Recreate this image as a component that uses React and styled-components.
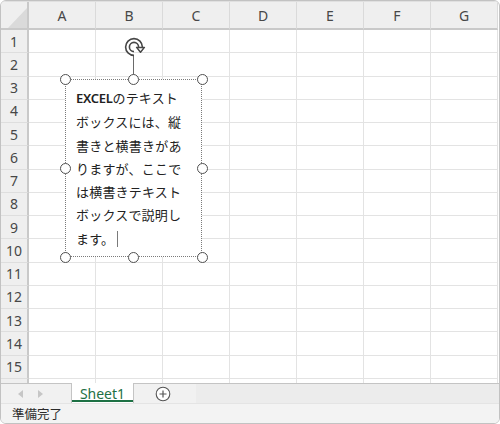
import React from "react";
import styled, { createGlobalStyle } from "styled-components";

const Global = createGlobalStyle`
  html, body { margin: 0; padding: 0; background: #ffffff; }
  body { font-family: "Noto Sans", "Noto Sans CJK JP", sans-serif; }
`;

const Frame = styled.div`
  position: relative;
  width: 500px;
  height: 424px;
  box-sizing: border-box;
  border: 1px solid #c2c2c2;
  border-radius: 6px;
  overflow: hidden;
  background: #ffffff;
  display: flex;
  flex-direction: column;
`;

const Sheet = styled.div`
  flex: 0 0 381px;
  overflow: hidden;
  display: grid;
  grid-template-columns: 28px repeat(7, 67px);
  grid-template-rows: 28px repeat(16, 23.25px);
  border-top: 1px solid #e0e0e0;
`;

const Corner = styled.div`
  position: relative;
  background: #efefef;
  border-right: 2px solid #c9c9c9;
  border-bottom: 2px solid #c9c9c9;
  box-sizing: border-box;
  svg { position: absolute; left: 7px; top: 6px; }
`;

const ColHead = styled.div`
  background: #efefef;
  border-right: 1px solid #dadada;
  border-bottom: 2px solid #c9c9c9;
  box-sizing: border-box;
  display: flex;
  align-items: center;
  justify-content: center;
  font-family: "Noto Sans", sans-serif;
  font-size: 14px;
  color: #474747;
  padding-top: 1px;
`;

const RowHead = styled.div`
  background: #efefef;
  border-right: 2px solid #c9c9c9;
  border-bottom: 1px solid #dedede;
  box-sizing: border-box;
  display: flex;
  align-items: center;
  justify-content: center;
  font-family: "Noto Sans", sans-serif;
  font-size: 14px;
  color: #474747;
`;

const Cell = styled.div`
  border-right: 1px solid #e3e3e3;
  border-bottom: 1px solid #e3e3e3;
  box-sizing: border-box;
`;

const TabBar = styled.div`
  flex: 0 0 20px;
  display: flex;
  align-items: stretch;
  border-top: 1px solid #c4c4c4;
  background: #ececec;
  box-sizing: border-box;
`;

const NavArea = styled.div`
  width: 70px;
  background: #f1f1f1;
  display: flex;
  align-items: center;
  gap: 15px;
  padding-left: 17px;
  box-sizing: border-box;
`;

const Arrow = styled.i`
  display: block;
  width: 0;
  height: 0;
  border-top: 4px solid transparent;
  border-bottom: 4px solid transparent;
  ${(p) => (p.$dir === "left" ? "border-right: 5px solid #c6c6c6;" : "border-left: 5px solid #c6c6c6;")}
`;

const Tab = styled.div`
  width: 63px;
  margin-top: -1px;
  background: #ffffff;
  border-left: 1px solid #c4c4c4;
  border-right: 1px solid #c4c4c4;
  box-sizing: border-box;
  display: flex;
  align-items: center;
  justify-content: center;
  font-family: "Noto Sans", sans-serif;
  font-size: 14px;
  color: #1e7145;
  position: relative;
  &::after {
    content: "";
    position: absolute;
    left: 0;
    right: 0;
    bottom: 1px;
    height: 2px;
    background: #1e7145;
  }
`;

const PlusArea = styled.div`
  width: 41px;
  background: #f1f1f1;
  display: flex;
  align-items: center;
  padding-left: 21px;
`;

const StatusBar = styled.div`
  flex: 1;
  background: #f3f3f3;
  border-top: 1px solid #e4e4e4;
  display: flex;
  align-items: center;
  padding-left: 11px;
  font-family: "Noto Sans CJK JP", sans-serif;
  font-size: 12.5px;
  color: #2b2b2b;
`;

const TextBox = styled.div`
  position: absolute;
  left: 64px;
  top: 78px;
  width: 137px;
  height: 178px;
  box-sizing: border-box;
  border: 1px dotted #7a7a7a;
  background: #ffffff;
  padding: 6px 0 0 10px;
  font-family: "Noto Sans CJK JP", sans-serif;
  font-size: 13px;
  letter-spacing: 0.2px;
  line-height: 23.3px;
  color: #222222;
  white-space: nowrap;
`;

const Latin = styled.span`
  font-family: "Noto Sans", "Noto Sans CJK JP", sans-serif;
  font-weight: 600;
  font-size: 13px;
  letter-spacing: -0.3px;
`;

const Caret = styled.span`
  display: inline-block;
  width: 1px;
  height: 16px;
  background: #7a7a7a;
  margin-left: 3px;
  vertical-align: -3px;
`;

const Handle = styled.div`
  position: absolute;
  left: ${(p) => p.$x}px;
  top: ${(p) => p.$y}px;
  width: 11px;
  height: 11px;
  box-sizing: border-box;
  margin: -5.5px 0 0 -5.5px;
  border: 1.6px solid #505050;
  border-radius: 50%;
  background: #ffffff;
`;

const Stem = styled.div`
  position: absolute;
  left: 132px;
  top: 55px;
  width: 1px;
  height: 20px;
  background: #6a6a6a;
`;

const Rotate = styled.svg`
  position: absolute;
  left: 122px;
  top: 35px;
`;

const cols = ["A", "B", "C", "D", "E", "F", "G"];
const rows = Array.from({ length: 16 }, (_, i) => i + 1);

const handles = [
  [64, 78], [132.5, 78], [201, 78],
  [64, 167], [201, 167],
  [64, 256], [132.5, 256], [201, 256],
];

export default function App() {
  return (
    <>
      <Global />
      <Frame>
        <Sheet>
          <Corner>
            <svg width="19" height="20" viewBox="0 0 19 20">
              <polygon points="19,0 19,20 0,20" fill="#dadada" />
            </svg>
          </Corner>
          {cols.map((c) => (
            <ColHead key={c}>{c}</ColHead>
          ))}
          {rows.map((r) => (
            <React.Fragment key={r}>
              <RowHead>{r}</RowHead>
              {cols.map((c) => (
                <Cell key={c} />
              ))}
            </React.Fragment>
          ))}
        </Sheet>
        <TabBar>
          <NavArea>
            <Arrow $dir="left" />
            <Arrow $dir="right" />
          </NavArea>
          <Tab>Sheet1</Tab>
          <PlusArea>
            <svg width="16" height="16" viewBox="0 0 16 16">
              <circle cx="8" cy="8" r="6.8" fill="#ffffff" stroke="#555555" strokeWidth="1.1" />
              <path d="M8 4.5 V11.5 M4.5 8 H11.5" stroke="#555555" strokeWidth="1.2" />
            </svg>
          </PlusArea>
        </TabBar>
        <StatusBar>準備完了</StatusBar>

        <Stem />
        <Rotate width="24" height="22" viewBox="0 0 24 22">
          <path d="M11 17.5 A6.5 6.5 0 1 1 17.5 11" fill="none" stroke="#474747" strokeWidth="5.4" />
          <path d="M11 17.5 A6.5 6.5 0 1 1 17.5 11" fill="none" stroke="#ffffff" strokeWidth="2.2" />
          <path d="M13.6 11.4 L21.4 11.4 L17.5 16.2 Z" fill="#ffffff" stroke="#474747" strokeWidth="1.5" strokeLinejoin="round" />
        </Rotate>
        <TextBox>
          <Latin>EXCEL</Latin>のテキスト<br />
          ボックスには、縦<br />
          書きと横書きがあ<br />
          りますが、ここで<br />
          は横書きテキスト<br />
          ボックスで説明し<br />
          ます。<Caret />
        </TextBox>
        {handles.map(([x, y], i) => (
          <Handle key={i} $x={x} $y={y} />
        ))}
      </Frame>
    </>
  );
}
